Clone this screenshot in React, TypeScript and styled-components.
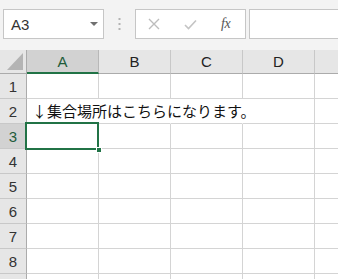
import styled, { createGlobalStyle } from 'styled-components';

const GlobalStyle = createGlobalStyle`
    html, body {
        margin: 0;
        padding: 0;
        background: #ffffff;
        overflow: hidden;
    }
    body {
        font-family: "Noto Sans", "Liberation Sans", sans-serif;
    }
`;

const GREEN = '#217346';
const columns = ['A', 'B', 'C', 'D', 'E'];
const rows = [1, 2, 3, 4, 5, 6, 7, 8, 9];
// cells that the row-2 text spills across (their right gridline is hidden)
const spill = ['A2', 'B2', 'C2'];

const Sheet = styled.div`
    width: 338px;
    height: 279px;
    overflow: hidden;
    background: #ffffff;
`;

const FormulaBar = styled.div`
    height: 50px;
    box-sizing: border-box;
    background: #f3f3f3;
    display: flex;
    align-items: flex-start;
    padding: 9px 0 0 3px;
`;

const NameBox = styled.div`
    width: 101px;
    height: 30px;
    box-sizing: border-box;
    background: #ffffff;
    border: 1px solid #c6c6c6;
    display: flex;
    align-items: center;
    justify-content: space-between;
    padding: 0 5px 0 7px;
    font-family: "Liberation Sans", "Noto Sans", sans-serif;
    font-size: 15px;
    color: #333;
`;

const Caret = styled.span`
    width: 0;
    height: 0;
    border-left: 4px solid transparent;
    border-right: 4px solid transparent;
    border-top: 4px solid #707070;
`;

const Grip = styled.div`
    width: 31px;
    height: 30px;
    display: flex;
    align-items: center;
    justify-content: center;
`;

const ButtonBox = styled.div`
    width: 111px;
    height: 30px;
    box-sizing: border-box;
    background: #ffffff;
    border: 1px solid #c6c6c6;
    display: flex;
    align-items: center;
    padding-left: 12px;
`;

const IconSlot = styled.span<{ $w: number }>`
    width: ${({ $w }) => $w}px;
    display: flex;
    align-items: center;
    justify-content: center;
`;

const Fx = styled.span`
    font-family: "Liberation Serif", "DejaVu Serif", serif;
    font-style: italic;
    font-size: 14px;
    color: #555;
    letter-spacing: -0.5px;
`;

const FormulaInput = styled.div`
    flex: 1;
    height: 30px;
    box-sizing: border-box;
    margin-left: 3px;
    background: #ffffff;
    border: 1px solid #c6c6c6;
    border-right: none;
`;

const Grid = styled.div`
    display: grid;
    grid-template-columns: 27px repeat(5, 72px);
    grid-template-rows: 24px repeat(9, 25px);
`;

const Corner = styled.div`
    background: #e6e6e6;
    border-right: 1px solid #ababab;
    border-bottom: 1px solid #ababab;
    box-sizing: border-box;
    display: flex;
    align-items: flex-end;
    justify-content: flex-end;
    padding: 0 3px 3px 0;
`;

const ColHeader = styled.div<{ $active?: boolean }>`
    box-sizing: border-box;
    background: ${({ $active }) => ($active ? '#d2d2d2' : '#e6e6e6')};
    border-right: 1px solid ${({ $active }) => ($active ? '#b8b8b8' : '#c8c8c8')};
    border-bottom: ${({ $active }) => ($active ? `2px solid ${GREEN}` : '1px solid #ababab')};
    display: flex;
    align-items: center;
    justify-content: center;
    padding-top: ${({ $active }) => ($active ? '1px' : '0')};
    font-family: "Liberation Sans", "Noto Sans", sans-serif;
    font-size: 15px;
    color: ${({ $active }) => ($active ? '#1e5c3a' : '#222')};
`;

const RowHeader = styled.div<{ $active?: boolean }>`
    box-sizing: border-box;
    background: ${({ $active }) => ($active ? '#d2d2d2' : '#e6e6e6')};
    border-right: 1px solid #ababab;
    border-bottom: 1px solid #c8c8c8;
    display: flex;
    align-items: center;
    justify-content: center;
    font-family: "Liberation Sans", "Noto Sans", sans-serif;
    font-size: 15px;
    color: ${({ $active }) => ($active ? '#1e5c3a' : '#333')};
`;

const Cell = styled.div<{ $selected?: boolean; $spill?: boolean }>`
    position: relative;
    box-sizing: border-box;
    border-right: 1px solid ${({ $spill }) => ($spill ? 'transparent' : '#d4d4d4')};
    border-bottom: 1px solid #d4d4d4;
    white-space: nowrap;
    z-index: ${({ $selected }) => ($selected ? 3 : 1)};
`;

const CellText = styled.span`
    position: absolute;
    left: 5px;
    top: 1px;
    z-index: 2;
    font-family: "Noto Sans CJK JP", "Noto Sans", sans-serif;
    font-size: 15px;
    line-height: 22px;
    color: #111;
`;

const Selection = styled.div`
    position: absolute;
    left: -2px;
    top: -2px;
    right: -1px;
    bottom: -2px;
    border: 2px solid ${GREEN};
    pointer-events: none;
`;

const Handle = styled.div`
    position: absolute;
    right: -5px;
    bottom: -5px;
    width: 6px;
    height: 6px;
    background: ${GREEN};
    border: 1px solid #ffffff;
    box-sizing: border-box;
`;

function App() {
    return (
        <Sheet>
            <GlobalStyle />
            <FormulaBar>
                <NameBox>
                    A3
                    <Caret />
                </NameBox>
                <Grip>
                    <svg width="3" height="12" viewBox="0 0 3 12">
                        <rect x="0.5" y="0" width="2" height="2" fill="#b3b3b3" />
                        <rect x="0.5" y="5" width="2" height="2" fill="#b3b3b3" />
                        <rect x="0.5" y="10" width="2" height="2" fill="#b3b3b3" />
                    </svg>
                </Grip>
                <ButtonBox>
                    <IconSlot $w={12}>
                        <svg width="12" height="12" viewBox="0 0 12 12">
                            <path d="M1 1 L11 11 M11 1 L1 11" stroke="#bdbdbd" strokeWidth="1.4" />
                        </svg>
                    </IconSlot>
                    <IconSlot $w={61}>
                        <svg width="13" height="11" viewBox="0 0 13 11">
                            <path d="M1 6 L4.5 9.5 L12 1.5" stroke="#c4c4c4" strokeWidth="1.6" fill="none" />
                        </svg>
                    </IconSlot>
                    <Fx>fx</Fx>
                </ButtonBox>
                <FormulaInput />
            </FormulaBar>
            <Grid>
                <Corner>
                    <svg width="16" height="17" viewBox="0 0 16 17">
                        <polygon points="16,0 16,17 0,17" fill="#b4b4b4" />
                    </svg>
                </Corner>
                {columns.map((c) => (
                    <ColHeader key={c} $active={c === 'A'}>
                        {c}
                    </ColHeader>
                ))}
                {rows.map((r) => [
                    <RowHeader key={`h${r}`} $active={r === 3}>
                        {r}
                    </RowHeader>,
                    ...columns.map((c) => {
                        const ref = `${c}${r}`;
                        const selected = ref === 'A3';
                        return (
                            <Cell key={ref} $selected={selected} $spill={spill.includes(ref)}>
                                {ref === 'A2' && <CellText>↓集合場所はこちらになります。</CellText>}
                                {selected && (
                                    <Selection>
                                        <Handle />
                                    </Selection>
                                )}
                            </Cell>
                        );
                    }),
                ])}
            </Grid>
        </Sheet>
    );
}

export default App;
